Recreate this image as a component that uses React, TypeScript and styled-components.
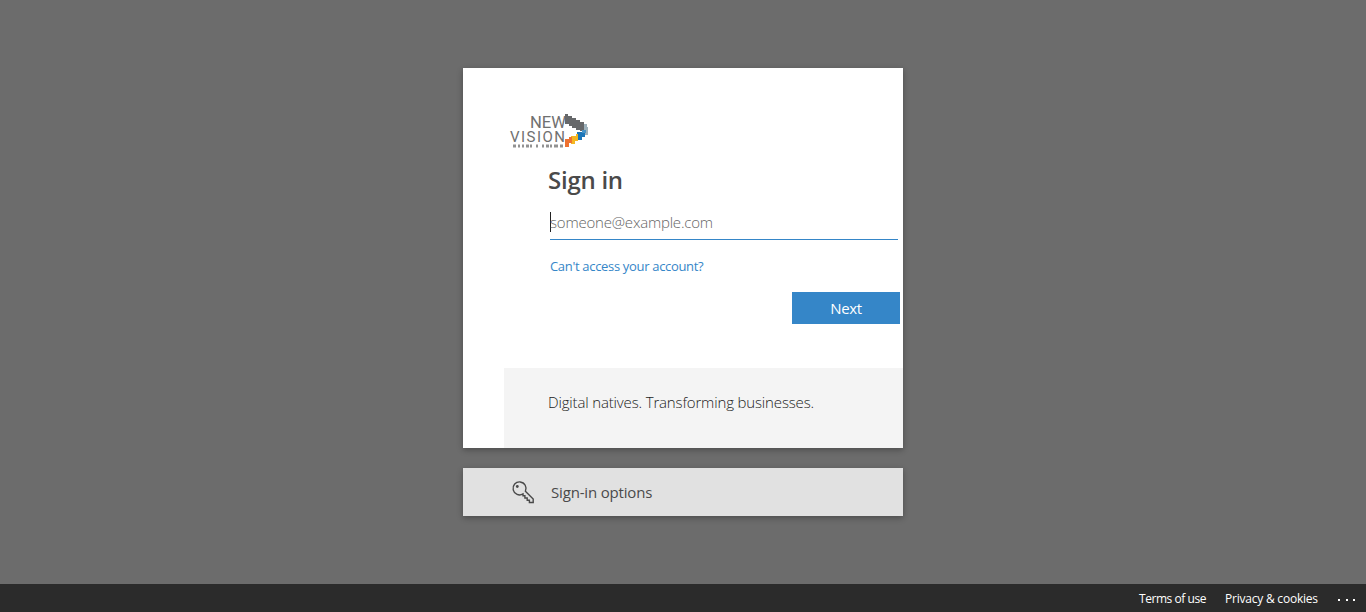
import React from "react";
import styled, { createGlobalStyle } from "styled-components";

const Global = createGlobalStyle`
  * { box-sizing: border-box; }
  body { margin: 0; font-family: "Segoe UI", "Open Sans", "Noto Sans", sans-serif; color: #4a4a4a; }
`;
const Page = styled.div`
  height: 612px; display: flex; flex-direction: column; background: #6c6c6c; overflow: hidden;
`;
const Main = styled.main`
  flex: 1; display: flex; flex-direction: column; align-items: center; gap: 20px; padding-top: 68px;
`;
const Card = styled.section`
  width: 440px; height: 380px; background: #fff; box-shadow: 0 2px 6px rgba(0,0,0,.3);
  display: flex; flex-direction: column;
`;
const Logo = styled.svg`
  display: block; width: 82px; height: 38px; margin: 44px 0 0 46px; flex: none;
`;
const Wordmark = styled.text`
  font-family: Roboto, "Liberation Sans", sans-serif; font-weight: 400; fill: #707070;
`;
const Form = styled.form`
  flex: 1; display: flex; flex-direction: column; padding: 13px 3px 0 85px;
`;
const Title = styled.h1`
  margin: 0; height: 34px; line-height: 33px; font-size: 24px; font-weight: 600; color: #4a4a4a;
  white-space: nowrap; letter-spacing: -0.25px;
`;
const Field = styled.div`
  display: flex; align-items: flex-start; height: 32px; margin: 11px 2px 0; padding-top: 4px;
  border-bottom: 1px solid #3586c8; white-space: nowrap;
`;
const Caret = styled.span`
  width: 1px; height: 20px; background: #222; margin-right: -1px;
`;
const Placeholder = styled.span`
  font-size: 15px; font-weight: 300; line-height: 20px; color: #656565; letter-spacing: -0.2px;
`;
const Help = styled.a`
  margin: 16px 0 0 2px; height: 20px; line-height: 20px; font-size: 13px; color: #3586c8; letter-spacing: -0.32px;
  white-space: nowrap;
`;
const Next = styled.button`
  align-self: flex-end; width: 108px; height: 32px; margin-top: 16px; border: 0; padding: 0;
  background: #3586c8; color: #fff; font: 400 15px/32px "Open Sans", sans-serif; letter-spacing: -0.4px;
`;
const Banner = styled.div`
  height: 80px; margin-left: 41px; padding: 24px 0 0 44px; background: #f4f4f4;
  font-size: 15px; font-weight: 300; line-height: 20px; white-space: nowrap; letter-spacing: -0.15px; color: #222;
`;
const Options = styled.section`
  width: 440px; height: 48px; display: flex; align-items: center; padding-left: 48px; gap: 15px;
  background: #e1e1e1; box-shadow: 0 2px 6px rgba(0,0,0,.3); white-space: nowrap;
`;
const OptionText = styled.span`
  font-size: 15px; line-height: 20px; font-weight: 400; color: #4a4a4a; letter-spacing: -0.17px;
`;
const Footer = styled.footer`
  height: 28px; display: flex; justify-content: flex-end; align-items: center; background: #2b2b2b;
  padding: 2px 10px 0 0; color: #fff; font-size: 12px; line-height: 26px; white-space: nowrap;
`;
const FooterLink = styled.a<{ $w: number; $gap: number; $track: number }>`
  width: ${(p) => p.$w}px; margin-right: ${(p) => p.$gap}px; letter-spacing: ${(p) => p.$track}px;
`;
const More = styled.svg`
  display: block; width: 18px; height: 4px; margin-top: 1px;
`;

const BrandLogo = () => (
  <Logo viewBox="0 0 82 38" fill="none" aria-label="New Vision">
    <Wordmark x="21" y="16" fontSize="17" textLength="36" lengthAdjust="spacingAndGlyphs">NEW</Wordmark>
    <Wordmark x="1" y="29.5" fontSize="15" textLength="55" lengthAdjust="spacing">VISION</Wordmark>
    <path d="M4 34h3M9 34h2M13 34h2M17 34h3M21 34h2M27 34h2M33 34h2M37 34h3M41 34h2M45 34h4M51 34h3" stroke="#929292" strokeWidth="3" />
    <path d="M56 2h3v2h4v2h4v2h4v2h4v3h3v6h-7v-1h-4v-2h-4v-2h-3v-2h-4z" fill="#66686a" />
    <path d="M75 12h3v3h1v8h-4z" fill="#9eb2bc" />
    <path d="M68 20h8v5h-3v3h-5z" fill="#1b76b9" />
    <path d="M73 18h4v3h-4z" fill="#4593c8" />
    <path d="M62 24h5v-2h2v7h-3v3h-4z" fill="#f4b722" />
    <path d="M56 27h4v-2h3v6h-3v4h-4z" fill="#ee7130" />
  </Logo>
);
const Key = () => (
  <svg width="25" height="25" viewBox="0 0 25 25" fill="none" stroke="#494949" strokeWidth="1.4">
    <path d="M14.400 11.200l7.800 7.800v3.500h-3.800v-2.200h-2.200v-2.300h-2.300v-2.200h-1.900v-1.900A6.500 6.500 0 1 1 14.400 11.200z" />
    <circle cx="6.300" cy="6.500" r="1.400" fill="#494949" stroke="none" />
  </svg>
);
const Dots = () => (
  <More viewBox="0 0 18 4" fill="#fff">
    <path d="M0 1h2v2H0zM8 1h2v2H8zM15 1h2v2h-2z" />
  </More>
);

export default function App() {
  return (
    <Page>
      <Global />
      <Main>
        <Card>
          <BrandLogo />
          <Form>
            <Title>Sign in</Title>
            <Field><Caret /><Placeholder>someone@example.com</Placeholder></Field>
            <Help>Can't access your account?</Help>
            <Next type="button">Next</Next>
          </Form>
          <Banner>Digital natives. Transforming businesses.</Banner>
        </Card>
        <Options><Key /><OptionText>Sign-in options</OptionText></Options>
      </Main>
      <Footer>
        <FooterLink $w={67} $gap={19} $track={-0.45}>Terms of use</FooterLink>
        <FooterLink $w={93} $gap={20} $track={-0.22}>Privacy &amp; cookies</FooterLink>
        <Dots />
      </Footer>
    </Page>
  );
}
